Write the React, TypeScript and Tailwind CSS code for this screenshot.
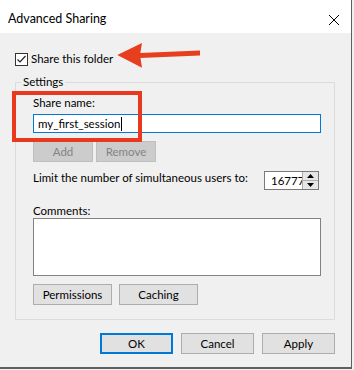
import React from "react"

function PushButton({ children, className = "" }: { children: React.ReactNode; className?: string }) {
  return (
    <button
      className={
        "h-[21px] border border-[#adadad] bg-[#e1e1e1] text-[11.5px] leading-none text-black " + className
      }
    >
      {children}
    </button>
  )
}

export default function App() {
  return (
    <div
      className="relative h-[370px] w-[354px] overflow-hidden bg-[#f0f0f0]"
      style={{ fontFamily: '"Segoe UI", Lato, sans-serif' }}
    >
      <div className="flex h-[369px] w-[352px] flex-col border-r border-b-2 border-[#5f5f5f] bg-[#f0f0f0]">
        {/* title bar */}
        <div className="flex h-[33px] items-center justify-between bg-white pl-2 pr-[11px] pt-[6px]">
          <span className="text-[12.5px] text-black">Advanced Sharing</span>
          <svg width="12" height="12" viewBox="0 0 12 12" className="text-black">
            <path d="M1 1 L11 11 M11 1 L1 11" stroke="currentColor" strokeWidth="1" />
          </svg>
        </div>

        <div className="flex flex-col pl-[15px] pr-[16px]">
          {/* checkbox */}
          <label className="mt-[19px] flex h-[14px] items-center gap-[3px] text-[11.5px] text-black">
            <span className="flex h-[13px] w-[13px] items-center justify-center border border-[#333] bg-white">
              <svg width="11" height="11" viewBox="0 0 11 11">
                <path d="M1.5 5.5 L4 8 L9.5 2" fill="none" stroke="#222" strokeWidth="1.2" />
              </svg>
            </span>
            Share this folder
          </label>

          {/* settings group */}
          <fieldset className="mt-[8px] border border-[#dcdcdc] pb-[14px] pl-[17px] pr-[13px]">
            <legend className="ml-[-12px] px-[2px] text-[11.5px] leading-4 text-black">Settings</legend>

            <div className="mt-[5px] h-4 text-[11.5px] leading-4 text-black">Share name:</div>
            <div className="mt-[3px] flex h-[19px] items-center border border-[#0078d7] bg-white px-[4px] text-[11.5px] text-black">
              my_first_session
              <span className="ml-[1px] h-[14px] w-px bg-black" />
            </div>

            <div className="mt-[8px] flex gap-[3px]">
              <button className="h-[21px] w-[60px] border border-[#bfbfbf] bg-[#cccccc] text-[11.5px] leading-none text-[#838383]">
                Add
              </button>
              <button className="h-[21px] w-[60px] border border-[#bfbfbf] bg-[#cccccc] text-[11.5px] leading-none text-[#838383]">
                Remove
              </button>
            </div>

            <div className="mt-[9px] flex items-start justify-between pr-[2px]">
              <span className="mt-[-1px] whitespace-nowrap text-[11.5px] leading-4 text-black">
                Limit the number of simultaneous users to:
              </span>
              <div className="flex h-[19px] w-[55px] shrink-0 border border-[#7a7a7a] bg-white">
                <span className="flex-1 overflow-hidden whitespace-nowrap pl-[6px] text-[11.5px] leading-[17px] text-black">
                  16777216
                </span>
                <div className="flex w-[16px] flex-col border-l border-[#acacac] bg-[#e6e6e6]">
                  <div className="flex flex-1 items-center justify-center border-b border-[#acacac]">
                    <svg width="7" height="4" viewBox="0 0 7 4">
                      <path d="M0 4 L3.5 0 L7 4 Z" fill="#000" />
                    </svg>
                  </div>
                  <div className="flex flex-1 items-center justify-center">
                    <svg width="7" height="4" viewBox="0 0 7 4">
                      <path d="M0 0 L3.5 4 L7 0 Z" fill="#000" />
                    </svg>
                  </div>
                </div>
              </div>
            </div>

            <div className="mt-[14px] h-[14px] text-[11.5px] leading-[14px] text-black">Comments:</div>
            <div className="h-[58px] border border-[#828282] bg-white" />

            <div className="mt-[8px] flex gap-[7px]">
              <PushButton className="w-[79px]">Permissions</PushButton>
              <PushButton className="w-[79px]">Caching</PushButton>
            </div>
          </fieldset>

          {/* dialog buttons */}
          <div className="mt-[13px] flex justify-end gap-[8px]">
            <button className="h-[21px] w-[73px] border-2 border-[#0078d7] bg-[#e1e1e1] text-[11.5px] leading-none text-black">
              OK
            </button>
            <PushButton className="w-[73px]">Cancel</PushButton>
            <PushButton className="w-[73px]">Apply</PushButton>
          </div>
        </div>
      </div>

      {/* annotations */}
      <div className="absolute left-[12px] top-[91px] h-[51px] w-[130px] border-4 border-[#e8391f]" />
      <svg className="absolute left-[110px] top-[38px]" width="100" height="36" viewBox="0 0 100 36">
        <path d="M30 15 L90 12.5 L90 17.5 L30 20 Z" fill="#e63e1f" />
        <path d="M7.3 17 L32 5 L30 17 L32 29.7 Z" fill="#e63e1f" />
      </svg>
    </div>
  )
}
